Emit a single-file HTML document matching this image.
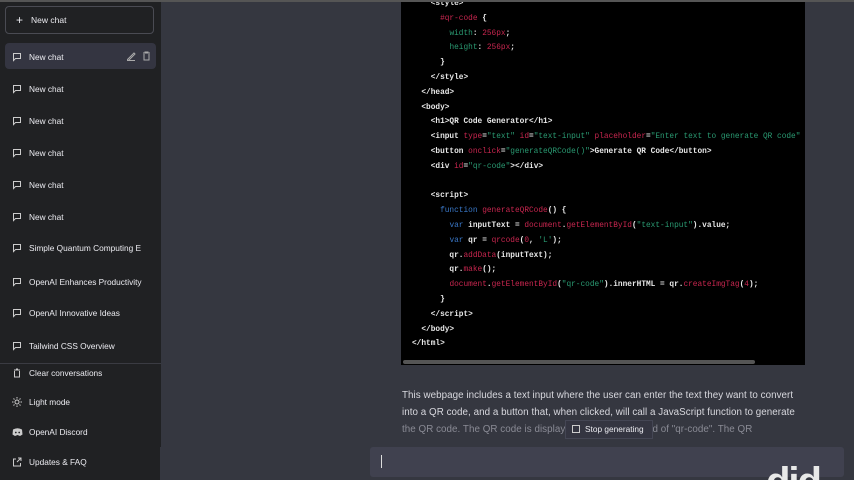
<!DOCTYPE html>
<html style="overflow:hidden;width:854px;height:480px"><head><style>
body{margin:0;width:854px;height:480px;overflow:hidden;background:#353740;font-family:"Liberation Sans",sans-serif;position:relative}
.sb{position:absolute;left:0;top:0;width:161px;height:480px;background:#202123}
.nc{position:absolute;left:5px;top:6px;width:149px;height:28px;border:1px solid #4a4b53;border-radius:4px;box-sizing:border-box;color:#ececf1;font-size:8.5px;line-height:26px}
.it{position:absolute;left:12px;color:#ececf1;font-size:8.3px;white-space:nowrap;width:135px;overflow:hidden}
.it svg{position:absolute;left:0;top:0}
.it span{position:absolute;left:17px;top:0}
.sel{position:absolute;left:5px;top:43px;width:151px;height:26px;background:#343541;border-radius:4px}
.code{position:absolute;left:401px;top:0;width:404px;height:365px;background:#000;overflow:hidden}
.code pre{margin:0;position:absolute;left:11px;top:-3px;font-family:"Liberation Mono",monospace;font-size:7.8px;line-height:14.8px;color:#e8e8e8;font-weight:bold}
.r{color:#c8264f;font-weight:normal}.g{color:#2a9a72;font-weight:normal}.b{color:#3a78c8;font-weight:normal}
.txt{position:absolute;left:402px;top:388px;width:440px;font-size:9.8px;line-height:16.8px;color:#d8d8de;white-space:nowrap;letter-spacing:0.05px}
</style></head><body>
<div class="sb">
<div class="nc"><span style="position:absolute;left:10px;font-size:12px;top:0">+</span><span style="position:absolute;left:25px">New chat</span></div>
<div class="sel"></div>
<svg style="position:absolute;left:127px;top:51px" width="26" height="10" fill="none" stroke="#aaa" stroke-width="1"><path d="M0 9L7 2 8 3 1 10Z M0 9.5H8"/><path d="M16 2h7M18 2V1h3v1M17 3v6h5V3"/></svg>
<div style="position:absolute;left:0;top:363px;width:161px;height:1px;background:#3a3b42"></div>
</div>
<div id="items"></div>
<script>
var L=[["New chat",52],["New chat",84],["New chat",116],["New chat",148],["New chat",180],["New chat",212],["Simple Quantum Computing E",243],["OpenAI Enhances Productivity",277],["OpenAI Innovative Ideas",308],["Tailwind CSS Overview",341],["Clear conversations",368],["Light mode",397],["OpenAI Discord",427],["Updates & FAQ",457]];
var h="";L.forEach(function(a,i){var ic='<svg width="10" height="10" fill="none" stroke="#ccc" stroke-width="1"><path d="M1.5 1.5h7v5h-5l-2 2z"/></svg>';
if(i==10)ic='<svg width="10" height="10" fill="none" stroke="#ccc"><path d="M2 2h6M4 1h2M2.5 3v6h5V3"/></svg>';
if(i==11)ic='<svg width="10" height="10" fill="none" stroke="#ccc"><circle cx="5" cy="5" r="2"/><path d="M5 0v1.5M5 8.5V10M0 5h1.5M8.5 5H10M1.5 1.5l1 1M7.5 7.5l1 1M1.5 8.5l1-1M7.5 2.5l1-1"/></svg>';
if(i==12)ic='<svg width="11" height="10"><path d="M1 2.5Q5.5 0 10 2.5L10.5 7.5 8 9 5.5 8 3 9 0.5 7.5Z" fill="#ccc"/><circle cx="3.8" cy="5.5" r="0.9" fill="#202123"/><circle cx="7.2" cy="5.5" r="0.9" fill="#202123"/></svg>';
if(i==13)ic='<svg width="10" height="10" fill="none" stroke="#ccc"><path d="M4 2H1.5v7h7V6M5 5l4-4M6 1h3v3"/></svg>';
h+='<div class="it" style="top:'+a[1]+'px;height:12px">'+ic+'<span>'+a[0].replace("&","&amp;")+'</span></div>';});
document.getElementById("items").innerHTML=h;
</script>
<div class="code"><pre>    &lt;style&gt;
      <span class="r">#qr-code</span> {
        <span class="g">width</span>: <span class="r">256px</span>;
        <span class="g">height</span>: <span class="r">256px</span>;
      }
    &lt;/style&gt;
  &lt;/head&gt;
  &lt;body&gt;
    &lt;h1&gt;QR Code Generator&lt;/h1&gt;
    &lt;input <span class="r">type</span>=<span class="g">"text"</span> <span class="r">id</span>=<span class="g">"text-input"</span> <span class="r">placeholder</span>=<span class="g">"Enter text to generate QR code"</span>
    &lt;button <span class="r">onclick</span>=<span class="g">"generateQRCode()"</span>&gt;Generate QR Code&lt;/button&gt;
    &lt;div <span class="r">id</span>=<span class="g">"qr-code"</span>&gt;&lt;/div&gt;

    &lt;script&gt;
      <span class="b">function</span> <span class="r">generateQRCode</span>() {
        <span class="b">var</span> inputText = <span class="r">document</span>.<span class="r">getElementById</span>(<span class="g">"text-input"</span>).value;
        <span class="b">var</span> qr = <span class="r">qrcode</span>(<span class="r">0</span>, <span class="g">'L'</span>);
        qr.<span class="r">addData</span>(inputText);
        qr.<span class="r">make</span>();
        <span class="r">document</span>.<span class="r">getElementById</span>(<span class="g">"qr-code"</span>).innerHTML = qr.<span class="r">createImgTag</span>(<span class="r">4</span>);
      }
    &lt;/script&gt;
  &lt;/body&gt;
&lt;/html&gt;</pre>
<div style="position:absolute;left:2px;top:360px;width:352px;height:4px;background:#555;border-radius:2px"></div>
</div>
<div style="position:absolute;left:0;top:0;width:854px;height:2px;background:#555"></div>
<div class="txt">This webpage includes a text input where the user can enter the text they want to convert<br>into a QR code, and a button that, when clicked, will call a JavaScript function to generate<br><span style="color:#8a8b95">the QR code. The QR code is displayed in a div with the id of "qr-code". The QR</span></div>
<div style="position:absolute;left:565px;top:420px;width:88px;height:19px;background:#343541;border:1px solid #444654;box-sizing:border-box;color:#ececf1;font-size:8.3px;line-height:17px"><span style="display:inline-block;width:6px;height:6px;border:1px solid #ccc;margin:0 5px 0 6px;vertical-align:-1px"></span>Stop generating</div>
<div style="position:absolute;left:160px;top:447px;width:694px;height:33px;background:#353740"></div>
<div style="position:absolute;left:370px;top:447px;width:474px;height:30px;background:#40414f;border-radius:3px"></div>
<div style="position:absolute;left:381px;top:455px;width:1px;height:13px;background:#ddd"></div>
<div style="position:absolute;left:760px;top:440px;width:94px;height:40px;overflow:hidden"><div style="position:absolute;left:6px;top:22px;font-size:40px;line-height:40px;font-weight:bold;color:#e8e8e8;letter-spacing:-2px">did</div></div>
</body></html>
